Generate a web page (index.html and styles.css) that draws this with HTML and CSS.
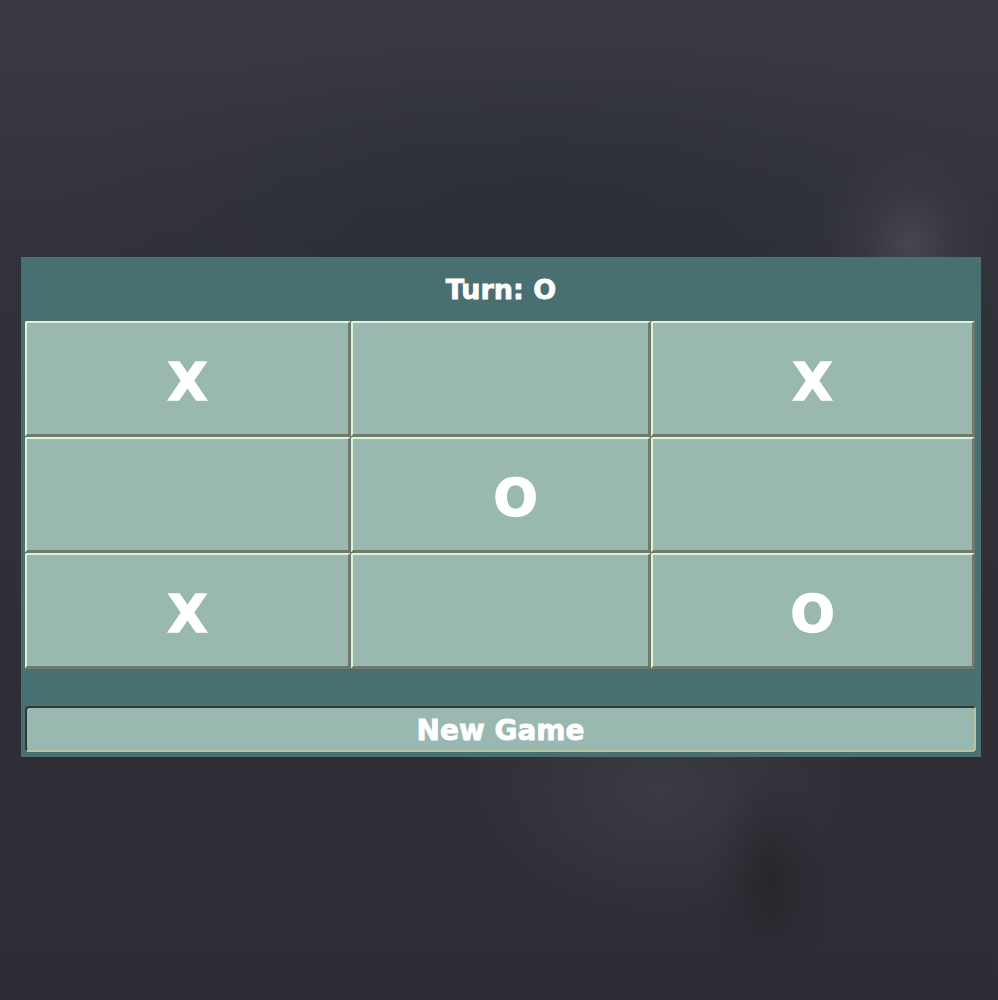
FILE: index.html
```html
<!DOCTYPE html>
<html>
<head>
<meta charset="utf-8">
<link rel="stylesheet" href="styles.css">
</head>
<body>
<div class="game">
  <div class="turn">Turn: O</div>
  <div class="board">
    <div class="cell">X</div>
    <div class="cell"></div>
    <div class="cell">X</div>
    <div class="cell"></div>
    <div class="cell cell-shift">O</div>
    <div class="cell"></div>
    <div class="cell">X</div>
    <div class="cell"></div>
    <div class="cell">O</div>
  </div>
  <button class="new-game">New Game</button>
</div>
</body>
</html>
```
FILE: styles.css
```css
html, body {
  margin: 0;
  padding: 0;
  height: 100%;
}
body {
  background:
    radial-gradient(ellipse 90px 110px at 910px 245px, rgba(72,71,80,0.95) 0, rgba(62,61,70,0.5) 50%, rgba(50,49,58,0) 100%),
    radial-gradient(ellipse 60px 110px at 770px 880px, rgba(36,36,40,0.85) 0, rgba(40,40,46,0.4) 55%, rgba(44,44,50,0) 100%),
    radial-gradient(ellipse 200px 140px at 660px 790px, rgba(64,64,72,0.7) 0, rgba(55,55,62,0) 100%),
    radial-gradient(ellipse 500px 200px at 540px 230px, rgba(40,45,52,0.7) 0, rgba(44,46,54,0) 100%),
    linear-gradient(180deg, #3a3a44 0%, #32323b 25%, #302f38 60%, #2e2d36 100%);
  font-family: "DejaVu Sans", sans-serif;
  font-weight: bold;
  color: #fff;
  padding-top: 257px;
  box-sizing: border-box;
}
.game {
  margin-left: 21px;
  width: 960px;
  height: 500px;
  box-sizing: border-box;
  background: #487070;
  padding: 0 6px 5px 4px;
  display: flex;
  flex-direction: column;
}
.turn {
  height: 64px;
  display: flex;
  align-items: center;
  justify-content: center;
  font-size: 27px;
  padding-left: 2px;
  padding-top: 1px;
  box-sizing: border-box;
  -webkit-text-stroke: 0.8px #fff;
}
.board {
  display: grid;
  grid-template-columns: 326px 300px 324px;
  grid-template-rows: 116px 116px 116px;
}
.cell {
  background: #99b8b0;
  border-style: solid;
  border-width: 2px 3px 3px 2px;
  border-color: #e2f2d6 #6f7a6c #6f7a6c #e2f2d6;
  border-radius: 2px;
  display: flex;
  align-items: center;
  justify-content: center;
  font-size: 52px;
  padding-top: 7px;
  box-sizing: border-box;
  -webkit-text-stroke: 1.5px #fff;
}
.cell-shift {
  padding-left: 30px;
}
.new-game {
  margin-top: 37px;
  height: 46px;
  width: 951px;
  background: #99b8b0;
  border: 2px solid;
  border-color: #2f3a36 #b8c4a8 #b8c4a8 #2f3a36;
  border-radius: 4px;
  color: #fff;
  font-family: "DejaVu Sans", sans-serif;
  font-weight: bold;
  font-size: 28px;
  padding: 2px 0 0 0;
  -webkit-text-stroke: 0.8px #fff;
}
```
